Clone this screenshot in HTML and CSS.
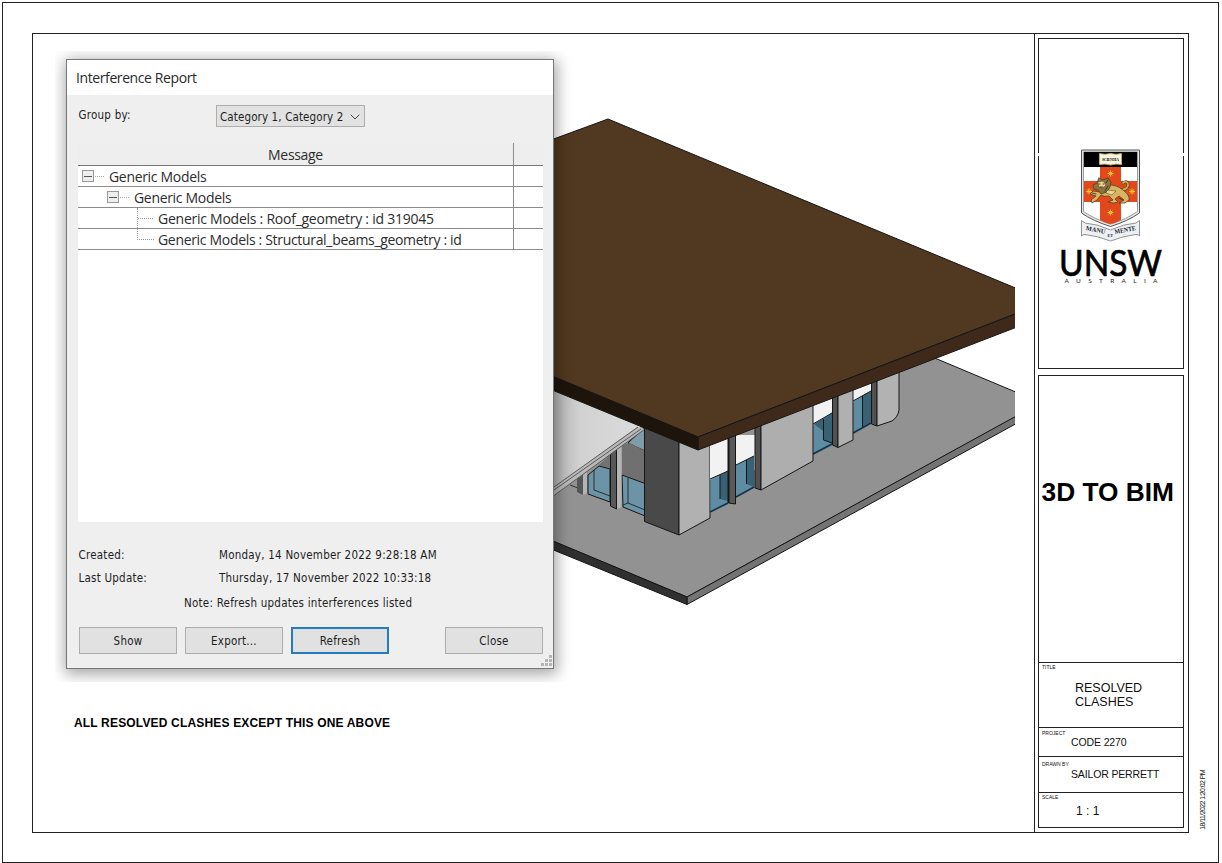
FILE: index.html
```html
<!DOCTYPE html>
<html lang="en">
<head>
<meta charset="utf-8">
<title>Resolved clashes sheet</title>
<link rel="stylesheet" href="styles.css">
</head>
<body>
<div class="sheet">
  <main class="frame">
    <section class="drawing">
      <svg class="scene" viewBox="33 34 1001 798" width="1001" height="798">
        <defs>
          <clipPath id="view"><rect x="500" y="100" width="515" height="520"/></clipPath>
          <linearGradient id="ramp" x1="0" x2="1"><stop offset="0" stop-color="#b5b5b5"/><stop offset=".3" stop-color="#d2d2d2"/><stop offset="1" stop-color="#dcdcdc"/></linearGradient>
        </defs>
        <g clip-path="url(#view)" stroke-linejoin="round" stroke="#161616" stroke-width="1">
          <!-- slab -->
          <path fill="#929292" d="M540 380L900 345L937 359L1030 398V409L687 597L540 536Z"/>
          <path fill="#747474" d="M687 597L1030 408.500V416L687 604.500Z"/>
          <path fill="#303030" d="M540 535.500L687 597V604.500L540 544.500Z"/>
          <!-- glazing beside the ramp -->
          <path fill="#7f9cab" d="M628 443L645 427V451Z"/>
          <path fill="#727272" d="M599 465L610 455V469L600 466Z" stroke="none"/>
          <path fill="#6d93a6" d="M588 475L599 466L610 469V502L588 494Z"/>
          <path fill="none" stroke-width=".8" d="M594 470V490L610 496"/>
          <path fill="#707070" d="M622 445L630 443L645 451V484L622 475Z" stroke="none"/>
          <path fill="#6d93a6" d="M622 475L645 483.500V516L623 507Z"/>
          <path fill="none" stroke-width=".8" d="M628 478V503L623 505M628 503L645 510M570 485L578 488"/>
          <path fill="#555" d="M577 477L583 473V495L577 492Z" stroke="none"/>
          <path fill="#b3b3b3" d="M583 474L587 470V493L583 495Z" stroke="none"/>
          <path fill="#585858" d="M610.500 454L616.500 449V509L610.500 506Z"/>
          <path fill="#b5b5b5" d="M617 449L621.500 445V507L617 509Z" stroke="none"/>
          <!-- ramp -->
          <path fill="url(#ramp)" stroke="none" d="M554 385L645 424L554 490Z"/>
          <path fill="#b9b9b9" stroke="none" d="M554 487L637 427L645 429L554 496Z"/>
          <path fill="none" stroke="#444" stroke-width=".8" d="M554 487L638 427M554 490L641 429M554 495.500L645 429"/>
          <!-- corner block -->
          <path fill="#494949" d="M644.500 420H679V535L644.500 521.500Z"/>
          <path fill="#b1b1b1" d="M679 435H710V518L679 535Z"/>
          <!-- long side -->
          <g stroke="none">
            <path fill="#f2f2f2" d="M710 435H755V470L710 480ZM813 395H832V420L813 426ZM853 375H871V395L853 403Z"/>
            <path fill="#5d8ca3" d="M710.500 479L728 471V504L710.500 513ZM736 465L754 456V488L736 498ZM813.500 424L832 413V446L813.500 455ZM853.500 401L871 391V424L853.500 434Z"/>
            <path fill="#386174" d="M720 475L728 471V501L720 499ZM746.500 460L754 456V487L746.500 484ZM823.500 419L832 413V443L823.500 440ZM862.500 396L871 391V422L862.500 427ZM814 424L823 419V431Z"/>
          </g>
          <path fill="none" d="M710 479L728 471M736 465L754 456M813 424L832 413M853 401L871 391M720 475V499M746.500 460V484M823.500 419V440L832 443M862.500 396V427"/>
          <path fill="none" stroke="#17323f" stroke-width="1.500" d="M710 512L728 503M736 497L754 487M813 454L832 444M853 433L871 423"/>
          <path fill="#595959" d="M728.500 430H735.500V504L728.500 503Z"/>
          <path fill="none" stroke-width="2" d="M728.500 430V503"/>
          <path fill="#515151" d="M755 425H761V490L755 488ZM832.500 390H838V447.500L832.500 445ZM871.500 370H877V426L871.500 424Z"/>
          <path fill="#aeaeae" d="M761 420L813 395V461L761 490Z"/>
          <path fill="#b0b0b0" d="M838 390L853 383V440L838 447.500Z"/>
          <path fill="#b2b2b2" d="M877 375L899 360V410Q898 417 892 421L877 426Z"/>
          <!-- roof -->
          <path fill="#513820" d="M540 144L608 119L1030 294V308L698 437L540 371Z"/>
          <path fill="#3f291a" d="M698 437L1030 308.300V322L698 450Z"/>
          <path fill="#1d150b" d="M540 371L698 437V450L540 385Z"/>
        </g>
      </svg>

      <div class="capture">
        <div class="dialog">
          <div class="dialog-title"><span>Interference Report</span></div>
          <div class="group-row">
            <span class="group-label">Group by:</span>
            <div class="select"><span>Category 1, Category 2</span>
              <svg width="10" height="6" viewBox="0 0 10 6"><path d="M.7.7L5 5L9.300.7" fill="none" stroke="#444"/></svg>
            </div>
          </div>
          <div class="tree">
            <div class="tree-row tree-head"><div class="cell"><span>Message</span></div><div class="side"></div></div>
            <div class="tree-row"><div class="cell lvl1"><i class="toggle"></i><i class="dots"></i><span>Generic Models</span></div><div class="side"></div></div>
            <div class="tree-row"><div class="cell lvl2"><i class="toggle"></i><i class="dots"></i><span>Generic Models</span></div><div class="side"></div></div>
            <div class="tree-row"><div class="cell lvl3"><i class="branch through"></i><span class="roof">Generic Models : Roof_geometry : id 319045</span></div><div class="side"></div></div>
            <div class="tree-row"><div class="cell lvl3"><i class="branch"></i><span>Generic Models : Structural_beams_geometry : id</span></div><div class="side"></div></div>
          </div>
          <dl class="dates">
            <dt>Created:</dt><dd>Monday, 14 November 2022 9:28:18 AM</dd>
            <dt>Last Update:</dt><dd>Thursday, 17 November 2022 10:33:18</dd>
          </dl>
          <p class="note">Note: Refresh updates interferences listed</p>
          <div class="buttons">
            <div class="btn">Show</div><div class="btn">Export...</div><div class="btn focus">Refresh</div><div class="btn last">Close</div>
          </div>
          <svg class="grip" width="11" height="11" viewBox="0 0 11 11"><path fill="#b5b5b5" d="M8 0h3v3h-3zM4 4h3v3h-3zM8 4h3v3h-3zM0 8h3v3h-3zM4 8h3v3h-3zM8 8h3v3h-3z"/></svg>
        </div>
      </div>
      <p class="caption">ALL RESOLVED CLASHES EXCEPT THIS ONE ABOVE</p>
    </section>

    <aside class="titleblock">
      <div class="logo-box">
        <svg class="logo" viewBox="1035 145 152 145" width="152" height="145">
          <path fill="#fff" d="M1036 153h8v3h-8zM1180 153h7v3h-7z"/>
          <path fill="#e4e6ea" stroke="#555" d="M1081.500 150H1139.500V213Q1128 221 1110.500 226.500Q1093 221 1081.500 213Z"/>
          <path fill="#fff" stroke="#777" stroke-width=".7" d="M1083.500 152H1137.500V211.500Q1127 219 1110.500 224Q1094 219 1083.500 211.500Z"/>
          <path fill="#000" d="M1084 152H1137V167H1084Z"/>
          <path fill="#e2481b" d="M1100 167H1121V181H1137V202H1121V220Q1116 223 1110.500 224Q1105 223 1100 220V202H1084V181H1100Z"/>
          <path fill="#f7f4de" stroke="#c9b768" stroke-width=".8" d="M1099.500 153.500Q1105 155 1110.500 153.500Q1116 155 1121.500 153.500V164.500Q1116 163.500 1110.500 165Q1105 163.500 1099.500 164.500Z"/>
          <text class="book" x="1102" y="160.800" textLength="17">SCIENTIA</text>
          <g fill="none" stroke="#f2c230" stroke-width="1">
            <path id="star" d="M1110.500 170.500v6M1107.500 173.500h6M1108.500 171.500l4 4M1112.500 171.500l-4 4"/>
            <use href="#star" y="39"/><use href="#star" x="-21.500" y="18"/><use href="#star" x="21.500" y="18"/>
          </g>
          <g stroke="#54431f" stroke-width=".8" stroke-linejoin="round" stroke-linecap="round">
            <path fill="none" stroke-width="3" d="M1121 190Q1129 189 1128 184Q1127 180 1123 183"/>
            <path fill="none" stroke="#d9ae50" stroke-width="1.700" d="M1121 190Q1129 189 1128 184Q1127 180 1123 183"/>
            <path fill="#d8b465" d="M1106 185Q1116 184 1123 190Q1130 195 1129 200L1125 203H1119L1124 200L1119 196L1115 199L1118 202Q1114 204 1108 202L1113 200L1109 196Q1104 197 1101 195L1097 200L1092 203L1091 200L1096 196L1090 194L1093 191L1100 192Z"/>
            <path fill="#8d7343" d="M1099 178L1103 180L1108 178L1111 182L1110 187L1107 192L1101 194L1098 190L1094 189L1093 185L1097 183Z"/>
            <path fill="#ecd48a" stroke-width=".5" d="M1098 182l5-1 3 4-3 3-4-1zM1108 190l8 1-4 4-6-2z"/>
            <path fill="none" stroke="#302a20" d="M1099 184h1M1103 184h1M1100 187l3 0M1092 193l4 1M1119 198l4 2M1108 180l-2 3M1108 186l-3 5"/>
          </g>
          <path fill="#edf0f5" stroke="#777" stroke-width=".8" d="M1081.500 220.500L1085 223Q1098 224 1110.500 230Q1123 224 1136 223L1139.500 220.500V236Q1138 234 1136 234.500Q1123 236 1110.500 241Q1098 236 1085 234.500Q1083 234 1081.500 236Z"/>
          <text class="motto" transform="translate(1085.500 230) rotate(11)" textLength="20" lengthAdjust="spacingAndGlyphs">MANU</text>
          <text class="motto et" x="1107.500" y="236.500" textLength="5.500" lengthAdjust="spacingAndGlyphs">ET</text>
          <text class="motto" transform="translate(1115 234) rotate(-11)" textLength="21.500" lengthAdjust="spacingAndGlyphs">MENTE</text>
          <text class="wordmark" x="1059" y="275.500" textLength="103" lengthAdjust="spacingAndGlyphs">UNSW</text>
          <text class="country" x="1064.500" y="283" textLength="93">AUSTRALIA</text>
        </svg>
      </div>
      <div class="info">
        <div class="row heading">3D TO BIM</div>
        <div class="row r-title"><small>TITLE</small><p>RESOLVED<br>CLASHES</p></div>
        <div class="row r-project"><small>PROJECT</small><p>CODE 2270</p></div>
        <div class="row r-drawn"><small>DRAWN BY</small><p>SAILOR PERRETT</p></div>
        <div class="row r-scale"><small>SCALE</small><p>1 : 1</p></div>
      </div>
    </aside>
  </main>
  <div class="stamp">18/11/2022 1:20:02 PM</div>
</div>
</body>
</html>
```
FILE: styles.css
```css
* { box-sizing: border-box; }
body { margin: 0; background: #fff; color: #111; font-family: "Liberation Sans", Arial, sans-serif; }
p, dl, dd { margin: 0; }

.sheet { display: flex; width: 1217px; height: 861px; margin: 2px 0 0 2px; padding: 30px 0 0 29px; border: 1px solid #222; }
.frame { display: flex; width: 1157px; height: 800px; border: 1px solid #222; flex: none; }
.drawing { position: relative; flex: 1; }
.scene { display: block; }

/* Dialog capture, with its shadow cropped at the capture edge */
.capture { position: absolute; left: 22px; top: 17px; width: 524px; height: 631px; padding: 8px 11px; overflow: hidden; }
.dialog { position: relative; display: flex; flex-direction: column; width: 488px; height: 610px; border: 1px solid #777; background: #efefef; box-shadow: 1px 3px 14px 2px rgba(0, 0, 0, .36); font-family: "DejaVu Sans Condensed", "DejaVu Sans", sans-serif; font-stretch: condensed; font-size: 11.5px; letter-spacing: .23px; color: #1d1d1d; white-space: nowrap; }
.dialog-title { height: 35px; padding-left: 9px; background: #fff; font: 14px/36px "Open Sans", sans-serif; letter-spacing: -.4px; color: #2a2a2a; }
.group-row { display: flex; height: 48px; padding: 10px 0 0 11.5px; }
.group-label { width: 137.5px; line-height: 21px; }
.select { display: flex; align-items: center; justify-content: space-between; width: 149px; height: 22px; padding: 1px 4px 0 3px; border: 1px solid #adadad; background: #e2e2e2; letter-spacing: .12px; }

.tree { width: 465px; height: 379px; margin-left: 11px; background: #fff; font: 14px/20px "Open Sans", sans-serif; letter-spacing: -.32px; color: #2c2c2c; }
.tree-row { display: flex; height: 21px; border-bottom: 1px solid #8c8c8c; }
.tree-head { height: 23px; background: #eee; border-bottom-color: #777; line-height: 24px; text-align: center; }
.cell { display: flex; align-items: center; flex: 1; border-right: 1px solid #8c8c8c; }
.cell span { position: relative; top: .5px; }
.roof { letter-spacing: -.25px; }
.tree-head .cell { justify-content: center; }
.side { width: 29px; }
.lvl1 { padding-left: 4px; }
.lvl2 { padding-left: 29px; }
.lvl3 { padding-left: 59px; }
.toggle { display: flex; align-items: center; width: 12px; height: 12px; padding: 0 1px; border: 1px solid #999; background: #eee; }
.toggle::before { content: ""; flex: 1; height: 1px; background: #555; }
.dots { width: 9px; margin: 0 5px 0 1px; border-top: 1px dotted #aaa; }
.branch { align-self: flex-start; width: 17px; height: 11px; margin-right: 4px; border-left: 1px dotted #999; border-bottom: 1px dotted #999; }
.through { height: 20px; border-bottom: 0; background: repeating-linear-gradient(90deg, #999 0 1px, transparent 1px 2px) 0 10px / 100% 1px no-repeat; }

.dates { display: grid; grid-template-columns: 140.5px auto; grid-auto-rows: 23px; padding: 22px 0 0 11.5px; line-height: 23px; }
.note { padding-left: 117px; line-height: 26px; }
.buttons { display: flex; gap: 8px; padding: 11px 10px 0 12px; }
.btn { width: 98px; height: 27px; border: 1px solid #adadad; background: #e1e1e1; line-height: 27px; text-align: center; }
.focus { border: 2px solid #2a7ab5; box-shadow: inset 0 0 0 1px #cfe3f3; line-height: 25px; }
.last { margin-left: auto; }
.grip { position: absolute; right: 1px; bottom: 2px; }

.caption { position: absolute; left: 41px; top: 682px; font-size: 12px; font-weight: bold; line-height: 15px; letter-spacing: .17px; white-space: nowrap; color: #000; }

.titleblock { display: flex; flex-direction: column; gap: 6px; width: 154px; padding: 4px 4px 4px 3px; border-left: 1px solid #222; }
.logo-box { height: 331px; padding-top: 106px; border: 1px solid #222; }
.logo { display: block; margin-left: -4px; }
.book { font: bold 4.2px "Liberation Serif", serif; fill: #222; }
.motto { font: bold 6.5px "Liberation Serif", serif; fill: #222; }
.et { font-size: 4.5px; }
.wordmark { font: 36.5px Lato, sans-serif; fill: #000; stroke: #000; stroke-width: .7px; }
.country { font: 6.5px Lato, sans-serif; fill: #222; }

.info { height: 453px; border: 1px solid #222; }
.row { border-bottom: 1px solid #222; }
.row:last-child { border-bottom: 0; }
.heading { height: 287px; padding: 101px 0 0 2.5px; font-size: 26.3px; font-weight: bold; line-height: 30px; white-space: nowrap; color: #000; }
.row small { display: block; padding-left: 3px; font-size: 5px; line-height: 8px; }
.r-title { height: 65px; }
.r-title p { padding: 10px 0 0 36px; font-size: 12.5px; line-height: 14px; }
.r-project { height: 29px; padding-top: 1px; }
.r-project p { padding-left: 32px; font-size: 10.5px; line-height: 11px; letter-spacing: -.12px; }
.r-drawn { height: 36px; padding-top: 3px; }
.r-drawn p { padding-left: 32px; font-size: 10.5px; line-height: 12px; letter-spacing: -.15px; }
.r-scale p { padding: 4px 0 0 37px; font-size: 12px; line-height: 13px; }

.stamp { align-self: flex-end; margin: 0 0 32px 9px; writing-mode: vertical-rl; transform: rotate(180deg); font-size: 7px; line-height: 9px; letter-spacing: -.6px; white-space: nowrap; }
```
